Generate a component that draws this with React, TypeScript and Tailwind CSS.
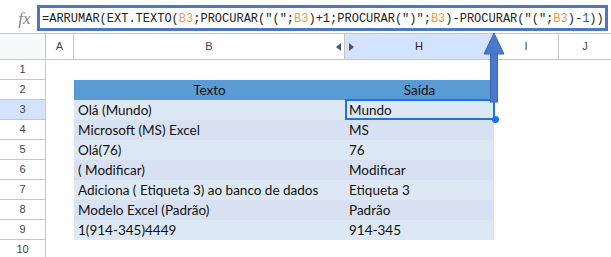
import React from "react";

const rows: [string, string][] = [
  ["Olá (Mundo)", "Mundo"],
  ["Microsoft (MS) Excel", "MS"],
  ["Olá(76)", "76"],
  ["( Modificar)", "Modificar"],
  ["Adiciona ( Etiqueta 3) ao banco de dados", "Etiqueta 3"],
  ["Modelo Excel (Padrão)", "Padrão"],
  ["1(914-345)4449", "914-345"],
];

const O = ({ children }: { children: React.ReactNode }) => (
  <span className="text-[#f29d38]">{children}</span>
);
const N = ({ children }: { children: React.ReactNode }) => (
  <span className="text-[#1a5fd0]">{children}</span>
);

function RowHead({ n, active }: { n: number; active?: boolean }) {
  return (
    <div
      className={`w-[46px] h-full shrink-0 border-r border-b border-[#c4c7c5] flex items-center justify-center text-[11px] text-[#444] ${
        active ? "bg-[#d3e3fd]" : "bg-white"
      }`}
      style={{ fontFamily: "Arial, 'Liberation Sans', sans-serif" }}
    >
      {n}
    </div>
  );
}

export default function App() {
  const cal = { fontFamily: "Lato, 'Open Sans', sans-serif" };
  return (
    <div className="relative w-[611px] h-[257px] overflow-hidden bg-white">
      {/* formula bar */}
      <div className="flex h-[33px]">
        <div className="w-[37px] shrink-0 flex items-center justify-center pt-[5px]">
          <span
            className="italic text-[17px] text-[#80868b] pl-[12px]"
            style={{ fontFamily: "'Liberation Serif', serif" }}
          >
            fx
          </span>
        </div>
        <div
          className="mt-[5px] h-[26px] w-[571px] border-[3px] border-[#4a78c6] flex items-center pl-[2px] pt-[2px] text-[12px] text-[#222] whitespace-nowrap"
          style={{ fontFamily: "'Liberation Mono', 'DejaVu Sans Mono', monospace" }}
        >
          =ARRUMAR(EXT.TEXTO(<O>B3</O>;PROCURAR("(";<O>B3</O>)+1;PROCURAR(")";<O>B3</O>)-PROCURAR("(";<O>B3</O>)-<N>1</N>))
        </div>
      </div>

      {/* column headers */}
      <div
        className="flex h-[27px] border-t border-b border-[#c4c7c5] text-[11px] text-[#444]"
        style={{ fontFamily: "Arial, 'Liberation Sans', sans-serif" }}
      >
        <div className="w-[46px] shrink-0 border-r border-[#c4c7c5] bg-[#f8f9fa]" />
        <div className="w-[28px] shrink-0 border-r border-[#c4c7c5] flex items-center justify-center">A</div>
        <div className="relative w-[271px] shrink-0 border-r border-[#c4c7c5] flex items-center justify-center">
          B
          <span className="absolute right-[3px] top-1/2 -translate-y-1/2 w-0 h-0 border-y-[4px] border-y-transparent border-r-[5px] border-r-[#555]" />
        </div>
        <div className="relative w-[149px] shrink-0 border-r border-[#c4c7c5] bg-[#d3e3fd] flex items-center justify-center text-[#222]">
          H
          <span className="absolute left-[4px] top-1/2 -translate-y-1/2 w-0 h-0 border-y-[4px] border-y-transparent border-l-[5px] border-l-[#555]" />
        </div>
        <div className="w-[65px] shrink-0 border-r border-[#c4c7c5] flex items-center justify-center">I</div>
        <div className="flex-1 flex items-center justify-center">J</div>
      </div>

      {/* row 1 */}
      <div className="flex h-[20px]">
        <RowHead n={1} />
      </div>
      {/* header row 2 */}
      <div className="flex h-[20px]">
        <RowHead n={2} />
        <div className="w-[28px] shrink-0" />
        <div
          className="w-[271px] shrink-0 bg-[#5b9bd5] flex items-center justify-center text-[13.5px] text-[#111]"
          style={cal}
        >
          Texto
        </div>
        <div
          className="w-[149px] shrink-0 bg-[#5b9bd5] flex items-center justify-center text-[13.5px] text-[#111]"
          style={cal}
        >
          Saída
        </div>
      </div>
      {rows.map(([a, b], i) => (
        <div className="flex h-[20px]" key={i}>
          <RowHead n={i + 3} active={i === 0} />
          <div className="w-[28px] shrink-0" />
          <div
            className={`w-[271px] shrink-0 flex items-center pl-[4px] text-[13.5px] text-[#111] whitespace-nowrap ${
              i % 2 === 0 ? "bg-[#dde8f5]" : "bg-[#d8e1f2]"
            }`}
            style={cal}
          >
            {a}
          </div>
          <div
            className={`w-[149px] shrink-0 flex items-center pl-[4px] text-[13.5px] text-[#111] whitespace-nowrap ${
              i % 2 === 0 ? "bg-[#dde8f5]" : "bg-[#d8e1f2]"
            }`}
            style={cal}
          >
            {b}
          </div>
        </div>
      ))}
      <div className="flex h-[20px]">
        <RowHead n={10} />
      </div>

      {/* selection H3 */}
      <div className="absolute left-[345px] top-[99px] w-[150px] h-[21px] border-2 border-[#1a73e8] pointer-events-none" />
      <div className="absolute left-[492px] top-[116px] w-[7px] h-[7px] rounded-full bg-[#1a73e8]" />

      {/* arrow */}
      <svg className="absolute left-[480px] top-[30px]" width="30" height="75" viewBox="0 0 30 75">
        <rect x="10.5" y="22" width="7" height="50" fill="#4a78cb" stroke="#3d66b3" strokeWidth="1" />
        <polygon points="4,24 24,24 14,3" fill="#4a78cb" stroke="#3d66b3" strokeWidth="1" />
      </svg>
    </div>
  );
}
